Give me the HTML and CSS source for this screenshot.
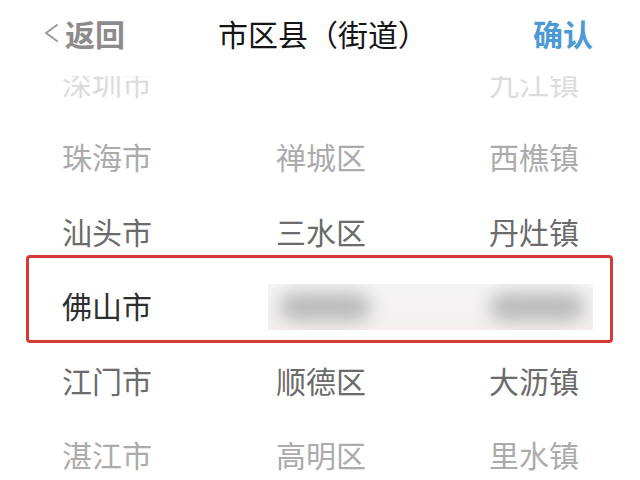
FILE: index.html
```html
<!DOCTYPE html>
<html lang="zh-CN">
<head>
<meta charset="utf-8">
<title>市区县（街道）</title>
<link rel="stylesheet" href="styles.css">
</head>
<body>
<div class="app">
  <header class="topbar">
    <a class="back">
      <svg class="chev" width="16" height="20" viewBox="0 0 16 20"><polyline points="14,2 3,10 14,18" fill="none" stroke="#9a9a9a" stroke-width="2" stroke-linecap="round" stroke-linejoin="round"/></svg>
      <span>返回</span>
    </a>
    <h1 class="title">市区县（街道）</h1>
    <a class="confirm">确认</a>
  </header>
  <div class="picker">
    <div class="rows">
      <div class="row far2"><span>深圳市</span><span></span><span>九江镇</span></div>
      <div class="row far1"><span>珠海市</span><span>禅城区</span><span>西樵镇</span></div>
      <div class="row near"><span>汕头市</span><span>三水区</span><span>丹灶镇</span></div>
      <div class="row current">
        <span>佛山市</span>
        <div class="redacted"><i class="blob b1"></i><i class="blob b2"></i></div>
        <div class="mark"></div>
      </div>
      <div class="row near"><span>江门市</span><span>顺德区</span><span>大沥镇</span></div>
      <div class="row far1"><span>湛江市</span><span>高明区</span><span>里水镇</span></div>
    </div>
  </div>
</div>
</body>
</html>
```

FILE: styles.css
```css
html, body {
  margin: 0;
  padding: 0;
  background: #ffffff;
}
body {
  font-family: "Noto Sans CJK SC", "Noto Sans", sans-serif;
  width: 640px;
  height: 480px;
  overflow: hidden;
}
.app {
  width: 640px;
  height: 480px;
  display: flex;
  flex-direction: column;
}
.topbar {
  height: 76px;
  flex: none;
  display: grid;
  grid-template-columns: 1fr auto 1fr;
  align-items: center;
  font-size: 30px;
  padding-bottom: 10px;
  box-sizing: border-box;
  background: #fff;
}
.back {
  display: flex;
  align-items: center;
  padding-left: 43px;
  gap: 6px;
  color: #8c8c8c;
  font-weight: 700;
}
.chev { display: block; }
.title {
  margin: 0;
  font-size: 30px;
  font-weight: 400;
  color: #151515;
  padding-left: 6px;
}
.confirm {
  justify-self: end;
  padding-right: 47px;
  color: #4b9ad6;
  font-weight: 700;
}
.picker {
  flex: 1;
  overflow: hidden;
}
.rows {
  margin-top: -31.75px;
}
.row {
  height: 74.5px;
  display: grid;
  grid-template-columns: 214px 214px 212px;
  align-items: center;
  font-size: 30px;
  line-height: 1;
  text-align: center;
  position: relative;
}
.row span { display: block; }
.far2 { color: #dcdcdc; }
.far1 { color: #ababab; }
.near { color: #6b6b6b; }
.current { color: #2e2e2e; }
.redacted {
  grid-column: 2 / 4;
  margin-left: 54px;
  margin-right: 47px;
  height: 46px;
  margin-top: 4px;
  background: linear-gradient(#f5f4f4, #f3f1f1 70%, #f8eeee);
  position: relative;
  overflow: hidden;
  display: flex;
  align-items: center;
}
.blob {
  display: block;
  height: 28px;
  border-radius: 14px;
  background: #b9b9b9;
  filter: blur(9px);
}
.b1 { width: 90px; margin-left: 12px; }
.b2 { width: 94px; margin-left: 120px; }
.mark {
  position: absolute;
  left: 26px;
  right: 27px;
  top: -13px;
  bottom: -1px;
  border: 3px solid #d63c37;
  border-radius: 4px;
  pointer-events: none;
}
```
